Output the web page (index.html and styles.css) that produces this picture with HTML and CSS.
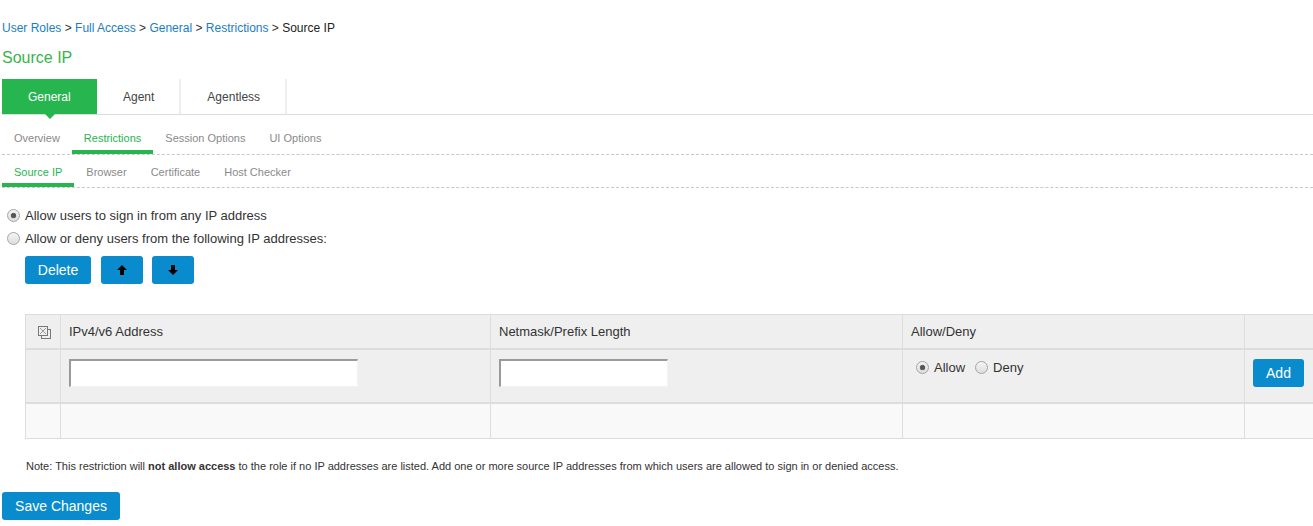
FILE: index.html
```html
<!DOCTYPE html>
<html>
<head>
<meta charset="utf-8">
<title>Source IP</title>
<link rel="stylesheet" href="styles.css">
</head>
<body>
<div class="page">
  <div class="breadcrumb">
    <a href="#">User Roles</a> &gt; <a href="#">Full Access</a> &gt; <a href="#">General</a> &gt; <a href="#">Restrictions</a> &gt; <span class="current">Source IP</span>
  </div>
  <h1 class="title">Source IP</h1>

  <div class="tabs">
    <div class="tab active">General</div>
    <div class="tab">Agent</div>
    <div class="tab">Agentless</div>
  </div>

  <div class="subnav subnav-1">
    <div class="subitem">Overview</div>
    <div class="subitem active">Restrictions</div>
    <div class="subitem">Session Options</div>
    <div class="subitem">UI Options</div>
  </div>
  <div class="subnav subnav-2">
    <div class="subitem active">Source IP</div>
    <div class="subitem">Browser</div>
    <div class="subitem">Certificate</div>
    <div class="subitem">Host Checker</div>
  </div>

  <div class="options">
    <div class="option"><span class="radio checked"></span>Allow users to sign in from any IP address</div>
    <div class="option"><span class="radio"></span>Allow or deny users from the following IP addresses:</div>
  </div>

  <div class="actions">
    <button class="btn btn-delete">Delete</button>
    <button class="btn btn-icon" aria-label="Move up">
      <svg width="10" height="10" viewBox="0 0 10 10"><path d="M5 0 L10 5 H7 V10 H3 V5 H0 Z" fill="#000"/></svg>
    </button>
    <button class="btn btn-icon" aria-label="Move down">
      <svg width="10" height="10" viewBox="0 0 10 10"><path d="M3 0 H7 V5 H10 L5 10 L0 5 H3 Z" fill="#000"/></svg>
    </button>
  </div>

  <div class="grid">
    <div class="cell head icon-cell">
      <svg width="13" height="13" viewBox="0 0 13 13">
        <rect x="3.5" y="3.5" width="9" height="9" fill="none" stroke="#777"/>
        <rect x="0.5" y="0.5" width="9" height="9" fill="#efefef" stroke="#777"/>
        <path d="M2 2 L8 8 M8 2 L2 8" stroke="#999" stroke-width="1"/>
      </svg>
    </div>
    <div class="cell head">IPv4/v6 Address</div>
    <div class="cell head">Netmask/Prefix Length</div>
    <div class="cell head">Allow/Deny</div>
    <div class="cell head"></div>

    <div class="cell entry"></div>
    <div class="cell entry"><input class="field field-ip" type="text"></div>
    <div class="cell entry"><input class="field field-mask" type="text"></div>
    <div class="cell entry">
      <div class="choice">
        <span class="radio checked"></span><span class="choice-label">Allow</span>
        <span class="radio"></span><span class="choice-label">Deny</span>
      </div>
    </div>
    <div class="cell entry"><button class="btn btn-add">Add</button></div>

    <div class="cell empty"></div>
    <div class="cell empty"></div>
    <div class="cell empty"></div>
    <div class="cell empty"></div>
    <div class="cell empty"></div>
  </div>

  <p class="note">Note: This restriction will <b>not allow access</b> to the role if no IP addresses are listed. Add one or more source IP addresses from which users are allowed to sign in or denied access.</p>

  <button class="btn btn-save">Save Changes</button>
</div>
</body>
</html>
```

FILE: styles.css
```css
html, body {
  margin: 0;
  padding: 0;
  background: #fff;
}
body {
  overflow-x: hidden;
  font-family: "Liberation Sans", Arial, sans-serif;
  color: #333;
}
.page {
  padding-left: 2px;
}

/* breadcrumb */
.breadcrumb {
  padding-top: 20px;
  font-size: 12px;
  line-height: 16px;
  color: #333;
}
.breadcrumb a {
  color: #1b7dc2;
  text-decoration: none;
}
.breadcrumb .current {
  color: #222;
}

.title {
  margin: 12px 0 0 0;
  font-size: 16px;
  line-height: 20px;
  font-weight: normal;
  color: #38b44a;
}

/* main tabs */
.tabs {
  margin-top: 11px;
  display: flex;
  height: 35px;
  border-bottom: 1px solid #dcdcdc;
}
.tab {
  position: relative;
  padding: 1px 25px 0 26px;
  line-height: 34px;
  font-size: 12px;
  color: #444;
  border-right: 2px solid #eeeeee;
}
.tab.active {
  background: #27b550;
  color: #fff;
  border-right: none;
  padding: 1px 26px 0 26px;
  width: 43px;
}
.tab.active::after {
  content: "";
  position: absolute;
  left: 50%;
  top: 100%;
  margin-left: -5px;
  border-left: 5px solid transparent;
  border-right: 5px solid transparent;
  border-top: 5px solid #27b550;
}

/* sub navigation */
.subnav {
  display: flex;
  border-bottom: 1px dashed #c8c8c8;
}
.subitem {
  padding: 0 12px;
  font-size: 11px;
  line-height: 14px;
  color: #8a8a8a;
  border-bottom: 4px solid transparent;
}
.subitem.active {
  color: #27b550;
  border-bottom-color: #27b550;
}
.subnav-1 .subitem {
  padding-top: 16px;
  padding-bottom: 5px;
}
.subnav-2 .subitem {
  padding-top: 10px;
  padding-bottom: 4px;
}

/* radios */
.options {
  margin-top: 16px;
}
.option {
  display: flex;
  align-items: center;
  height: 23px;
  font-size: 13px;
  color: #333;
}
.option .radio {
  margin: 0 5px 0 5px;
}
.radio {
  display: inline-block;
  box-sizing: border-box;
  width: 13px;
  height: 13px;
  border-radius: 50%;
  border: 1px solid #a5a5a5;
  background: linear-gradient(#f4f4f4, #dedede);
  position: relative;
  flex: none;
}
.radio.checked::after {
  content: "";
  position: absolute;
  left: 3px;
  top: 3px;
  width: 5px;
  height: 5px;
  border-radius: 50%;
  background: #555;
  box-shadow: 0 0 1px #777;
}

/* buttons */
.btn {
  box-sizing: border-box;
  height: 28px;
  border: none;
  border-radius: 3px;
  background: #0a8bcd;
  color: #fff;
  font-family: "Liberation Sans", Arial, sans-serif;
  font-size: 14px;
  padding: 0 13px;
  cursor: pointer;
}
.actions {
  margin-top: 6px;
  margin-left: 23px;
  display: flex;
  gap: 10px;
}
.btn-delete {
  width: 66px;
  padding: 0;
}
.btn-icon {
  width: 42px;
  padding: 0;
  display: flex;
  align-items: center;
  justify-content: center;
}
.btn-icon + .btn-icon {
  margin-left: -1px;
}

/* grid table */
.grid {
  margin-top: 30px;
  margin-left: 23px;
  width: 1300px;
  display: grid;
  grid-template-columns: 35px 430px 412px 342px 1fr;
  border-top: 1px solid #dddddd;
  border-left: 1px solid #dddddd;
}
.cell {
  box-sizing: border-box;
  border-right: 1px solid #dddddd;
  font-size: 13px;
  color: #333;
}
.head {
  height: 35px;
  padding: 0 8px;
  display: flex;
  align-items: center;
  background: #efefef;
  border-bottom: 2px solid #dddddd;
}
.icon-cell {
  justify-content: center;
  padding: 1px 0 0 2px;
}
.entry {
  height: 54px;
  padding: 9px 8px 0 8px;
  background: #efefef;
  border-bottom: 2px solid #dddddd;
}
.empty {
  height: 35px;
  background: #f9f9f9;
  border-bottom: 1px solid #dddddd;
}
.field {
  display: block;
  box-sizing: border-box;
  height: 28px;
  margin: 0;
  padding: 0 4px;
  background: #fff;
  border-top: 2px solid #9a9a9a;
  border-left: 2px solid #9a9a9a;
  border-right: 1px solid #f2f2f2;
  border-bottom: 1px solid #f2f2f2;
  outline: none;
}
.field-ip {
  width: 289px;
}
.field-mask {
  width: 169px;
}
.choice {
  display: flex;
  align-items: center;
  height: 16px;
  padding-left: 5px;
}
.choice .radio {
  margin-right: 5px;
}
.choice-label {
  font-size: 13px;
  margin-right: 10px;
}
.btn-add {
  width: 51px;
  padding: 0;
}

/* note and save */
.note {
  margin: 20px 0 0 24px;
  font-size: 11px;
  line-height: 14px;
  color: #333;
}
.note b {
  font-weight: bold;
}
.btn-save {
  margin-top: 19px;
  width: 118px;
  padding: 0;
  display: block;
}
```
